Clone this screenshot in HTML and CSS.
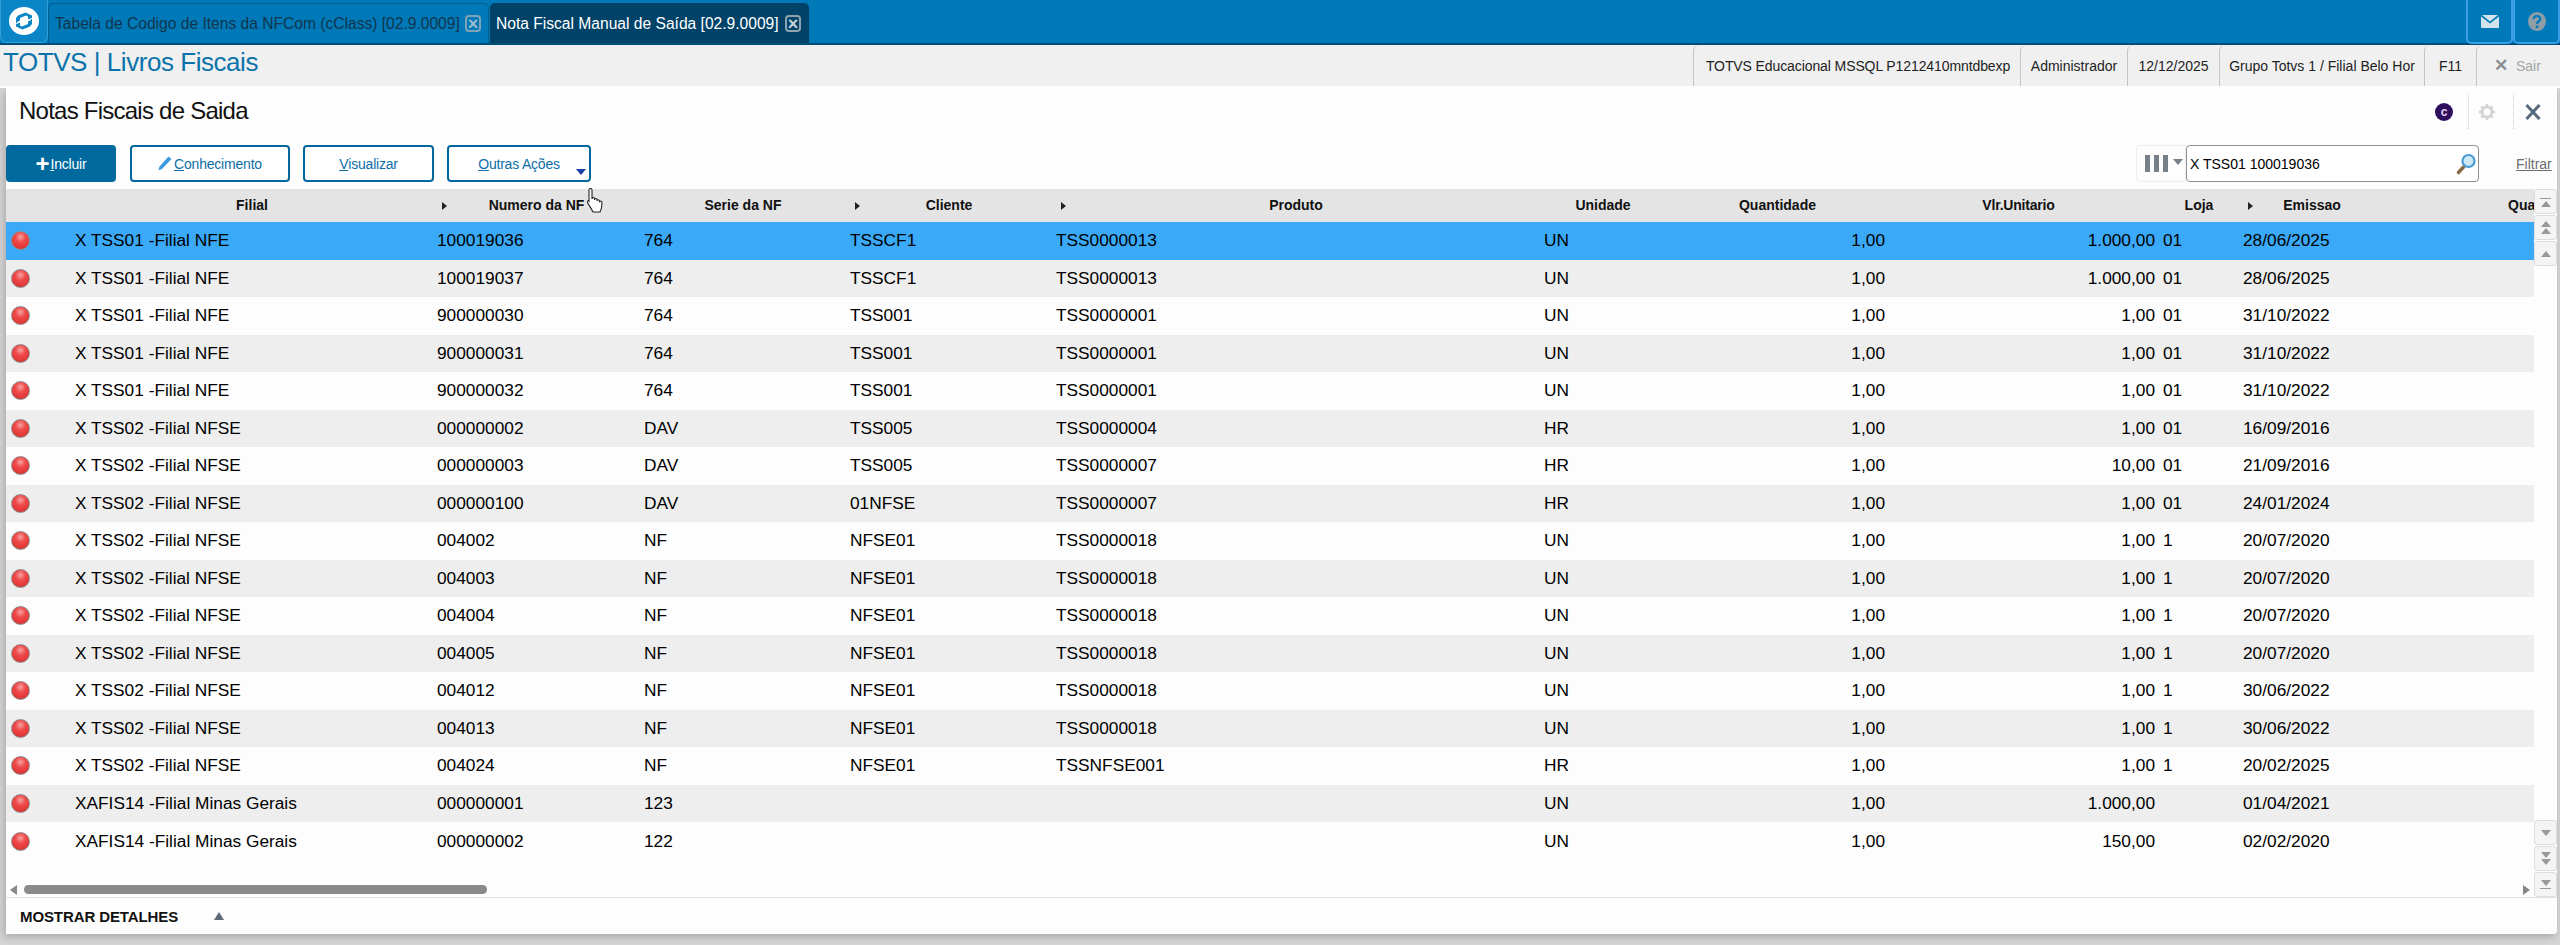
FILE: index.html
```html
<!DOCTYPE html>
<html lang="pt-BR">
<head>
<meta charset="utf-8">
<title>Notas Fiscais de Saida</title>
<link rel="stylesheet" href="styles.css">
</head>
<body>
<div class="app">
  <header class="topbar">
    <div class="logo">
      <svg width="30" height="28" viewBox="0 0 30 28"><ellipse cx="15" cy="14" rx="15" ry="14" fill="#fff"/><path d="M9 8.500 16.500 5.500 23 8.500 23 17 21 19.500 13.500 22.500 7 19.500 7 11z" fill="#0a86c6"/><path d="M6 17.500 19 12.500 19 9.500 17 8.500 11 11 11 13.500 9 14.500zM24 10.500 11 15.500 11 18.500 13 19.500 19 17 19 14.500 21 13.500z" fill="#fff"/></svg>
    </div>
    <div class="tab"><span class="tab-text">Tabela de Codigo de Itens da NFCom (cClass) [02.9.0009]</span><span class="tab-x">×</span></div>
    <div class="tab tab-active"><span class="tab-text">Nota Fiscal Manual de Saída [02.9.0009]</span><span class="tab-x">×</span></div>
    <div class="top-spacer"></div>
    <div class="top-btn">
      <svg width="18" height="13" viewBox="0 0 18 13"><path d="M1 0h16L9 6.500z" fill="#d3e3ec"/><path d="M0 1.500V12a1 1 0 0 0 1 1h16a1 1 0 0 0 1-1V1.500L9 8.500z" fill="#d3e3ec"/></svg>
    </div>
    <div class="top-btn top-btn-last">
      <svg width="18" height="19" viewBox="0 0 18 19"><ellipse cx="9" cy="9.500" rx="9" ry="9.500" fill="#8e9da6"/><path d="M5.800 7c0-4 6.400-4 6.400 0 0 2.600-3.200 2.400-3.200 5" fill="none" stroke="#0079b8" stroke-width="2.200"/><rect x="7.800" y="13.500" width="2.400" height="2.500" fill="#0079b8"/></svg>
    </div>
  </header>
  <div class="infobar">
    <div class="brand">TOTVS | Livros Fiscais</div>
    <div class="info info-env">TOTVS Educacional MSSQL P1212410mntdbexp</div>
    <div class="info info-user">Administrador</div>
    <div class="info info-date">12/12/2025</div>
    <div class="info info-group">Grupo Totvs 1 / Filial Belo Hor</div>
    <div class="info info-key">F11</div>
    <div class="info info-exit"><span class="exit-x">✕</span> Sair</div>
  </div>
  <main class="panel">
    <div class="title-row">
      <h1 class="title">Notas Fiscais de Saida</h1>
      <div class="title-tools">
        <span class="badge">c</span>
        <span class="tool tool-gear">
          <svg width="16" height="16" viewBox="0 0 16 16"><circle cx="8" cy="8" r="5" fill="none" stroke="#d4d4d4" stroke-width="3"/><path d="M8 0v3M8 13v3M0 8h3M13 8h3M2.300 2.300l2 2M11.700 11.700l2 2M13.700 2.300l-2 2M4.300 11.700l-2 2" stroke="#d4d4d4" stroke-width="2.400"/></svg>
        </span>
        <span class="tool tool-close">
          <svg width="16" height="16" viewBox="0 0 16 16"><path d="M1.500 1 14.500 15M14.500 1 1.500 15" stroke="#566a7c" stroke-width="3"/></svg>
        </span>
      </div>
    </div>
    <div class="action-row">
      <button class="btn btn-primary"><span class="plus">+</span><u>I</u>ncluir</button>
      <button class="btn btn-know">
        <svg class="pencil" width="14" height="15" viewBox="0 0 14 15"><path d="M10.500 .5 13.500 3 4 13 .5 14.500 1.500 10.500z" fill="#3d9ae0"/></svg><u>C</u>onhecimento</button>
      <button class="btn btn-view"><u>V</u>isualizar</button>
      <button class="btn btn-more"><u>O</u>utras Ações<span class="caret"></span></button>
      <div class="action-spacer"></div>
      <div class="columns-btn"><span class="col-bars"><i></i><i></i><i></i></span><span class="col-caret"></span></div>
      <div class="search">
        <span class="search-text">X TSS01 100019036</span>
        <svg width="20" height="22" viewBox="0 0 20 22"><path d="M7.500 14 2.500 19.500" stroke="#8a6a45" stroke-width="3.500" stroke-linecap="round"/><circle cx="12.500" cy="8" r="6" fill="#cfe8f8" stroke="#4a9bd4" stroke-width="2.200"/></svg>
      </div>
      <a class="filter">Filtrar</a>
    </div>
    <div class="grid-wrap">
      <div class="table">
        <div class="thead cols">
          <div></div>
          <div class="th">Filial</div>
          <div class="th sorted">Numero da NF</div>
          <div class="th">Serie da NF</div>
          <div class="th sorted">Cliente</div>
          <div class="th sorted">Produto</div>
          <div class="th">Unidade</div>
          <div class="th th-end">Quantidade</div>
          <div class="th th-vlr">Vlr.Unitario</div>
          <div class="th th-end">Loja</div>
          <div class="th sorted">Emissao</div>
          <div class="th th-last">Qua</div>
        </div>
        <div class="row cols row-selected"><div><span class="dot"></span></div><div>X TSS01 -Filial NFE</div><div>100019036</div><div>764</div><div>TSSCF1</div><div>TSS0000013</div><div>UN</div><div class="num">1,00</div><div class="num">1.000,00</div><div class="loja">01</div><div>28/06/2025</div><div></div></div>
        <div class="row cols"><div><span class="dot"></span></div><div>X TSS01 -Filial NFE</div><div>100019037</div><div>764</div><div>TSSCF1</div><div>TSS0000013</div><div>UN</div><div class="num">1,00</div><div class="num">1.000,00</div><div class="loja">01</div><div>28/06/2025</div><div></div></div>
        <div class="row cols"><div><span class="dot"></span></div><div>X TSS01 -Filial NFE</div><div>900000030</div><div>764</div><div>TSS001</div><div>TSS0000001</div><div>UN</div><div class="num">1,00</div><div class="num">1,00</div><div class="loja">01</div><div>31/10/2022</div><div></div></div>
        <div class="row cols"><div><span class="dot"></span></div><div>X TSS01 -Filial NFE</div><div>900000031</div><div>764</div><div>TSS001</div><div>TSS0000001</div><div>UN</div><div class="num">1,00</div><div class="num">1,00</div><div class="loja">01</div><div>31/10/2022</div><div></div></div>
        <div class="row cols"><div><span class="dot"></span></div><div>X TSS01 -Filial NFE</div><div>900000032</div><div>764</div><div>TSS001</div><div>TSS0000001</div><div>UN</div><div class="num">1,00</div><div class="num">1,00</div><div class="loja">01</div><div>31/10/2022</div><div></div></div>
        <div class="row cols"><div><span class="dot"></span></div><div>X TSS02 -Filial NFSE</div><div>000000002</div><div>DAV</div><div>TSS005</div><div>TSS0000004</div><div>HR</div><div class="num">1,00</div><div class="num">1,00</div><div class="loja">01</div><div>16/09/2016</div><div></div></div>
        <div class="row cols"><div><span class="dot"></span></div><div>X TSS02 -Filial NFSE</div><div>000000003</div><div>DAV</div><div>TSS005</div><div>TSS0000007</div><div>HR</div><div class="num">1,00</div><div class="num">10,00</div><div class="loja">01</div><div>21/09/2016</div><div></div></div>
        <div class="row cols"><div><span class="dot"></span></div><div>X TSS02 -Filial NFSE</div><div>000000100</div><div>DAV</div><div>01NFSE</div><div>TSS0000007</div><div>HR</div><div class="num">1,00</div><div class="num">1,00</div><div class="loja">01</div><div>24/01/2024</div><div></div></div>
        <div class="row cols"><div><span class="dot"></span></div><div>X TSS02 -Filial NFSE</div><div>004002</div><div>NF</div><div>NFSE01</div><div>TSS0000018</div><div>UN</div><div class="num">1,00</div><div class="num">1,00</div><div class="loja">1</div><div>20/07/2020</div><div></div></div>
        <div class="row cols"><div><span class="dot"></span></div><div>X TSS02 -Filial NFSE</div><div>004003</div><div>NF</div><div>NFSE01</div><div>TSS0000018</div><div>UN</div><div class="num">1,00</div><div class="num">1,00</div><div class="loja">1</div><div>20/07/2020</div><div></div></div>
        <div class="row cols"><div><span class="dot"></span></div><div>X TSS02 -Filial NFSE</div><div>004004</div><div>NF</div><div>NFSE01</div><div>TSS0000018</div><div>UN</div><div class="num">1,00</div><div class="num">1,00</div><div class="loja">1</div><div>20/07/2020</div><div></div></div>
        <div class="row cols"><div><span class="dot"></span></div><div>X TSS02 -Filial NFSE</div><div>004005</div><div>NF</div><div>NFSE01</div><div>TSS0000018</div><div>UN</div><div class="num">1,00</div><div class="num">1,00</div><div class="loja">1</div><div>20/07/2020</div><div></div></div>
        <div class="row cols"><div><span class="dot"></span></div><div>X TSS02 -Filial NFSE</div><div>004012</div><div>NF</div><div>NFSE01</div><div>TSS0000018</div><div>UN</div><div class="num">1,00</div><div class="num">1,00</div><div class="loja">1</div><div>30/06/2022</div><div></div></div>
        <div class="row cols"><div><span class="dot"></span></div><div>X TSS02 -Filial NFSE</div><div>004013</div><div>NF</div><div>NFSE01</div><div>TSS0000018</div><div>UN</div><div class="num">1,00</div><div class="num">1,00</div><div class="loja">1</div><div>30/06/2022</div><div></div></div>
        <div class="row cols"><div><span class="dot"></span></div><div>X TSS02 -Filial NFSE</div><div>004024</div><div>NF</div><div>NFSE01</div><div>TSSNFSE001</div><div>HR</div><div class="num">1,00</div><div class="num">1,00</div><div class="loja">1</div><div>20/02/2025</div><div></div></div>
        <div class="row cols"><div><span class="dot"></span></div><div>XAFIS14 -Filial Minas Gerais</div><div>000000001</div><div>123</div><div></div><div></div><div>UN</div><div class="num">1,00</div><div class="num">1.000,00</div><div class="loja"></div><div>01/04/2021</div><div></div></div>
        <div class="row cols"><div><span class="dot"></span></div><div>XAFIS14 -Filial Minas Gerais</div><div>000000002</div><div>122</div><div></div><div></div><div>UN</div><div class="num">1,00</div><div class="num">150,00</div><div class="loja"></div><div>02/02/2020</div><div></div></div>
        <div class="table-fill"></div>
        <div class="hscroll">
          <span class="arrow-left"></span>
          <span class="thumb"></span>
          <span class="hscroll-fill"></span>
          <span class="arrow-right"></span>
        </div>
      </div>
      <aside class="vscroll">
        <div class="vbtn"><span class="bar"></span><span class="up"></span></div>
        <div class="vbtn"><span class="up"></span><span class="up"></span></div>
        <div class="vbtn vbtn-up"><span class="up"></span></div>
        <div class="vfill"></div>
        <div class="vbtn vbtn-down"><span class="down"></span></div>
        <div class="vbtn"><span class="down"></span><span class="down"></span></div>
        <div class="vbtn"><span class="down"></span><span class="bar"></span></div>
      </aside>
    </div>
    <footer class="details">
      <span class="details-label">MOSTRAR DETALHES</span>
      <span class="details-caret"></span>
    </footer>
  </main>
  <svg class="hand" width="16" height="25" viewBox="0 0 16 25"><path d="M2 2c0-2 3-2 3 0v9c0-2 2.500-2 2.500 0v1c0-2 2.500-2 2.500 0v1c0-2 2.500-1.500 2.500 .5 .8-.8 2.500-.5 2.500 1.500 0 3-.5 6-2 9H6C4.500 21 2.500 18 1 15.500-.2 13.500 1 12 2 13z" fill="#fff" stroke="#222" stroke-width="1.100"/></svg>
</div>
</body>
</html>
```

FILE: styles.css
```css
* { box-sizing: border-box; }
html, body { margin: 0; height: 945px; overflow: hidden; }
body { font-family: "Liberation Sans", Arial, sans-serif; color: #000; background: #d6d6d6; }
.app { position: relative; display: flex; flex-direction: column; height: 945px; }

.topbar { display: flex; height: 45px; flex: none; background: #0079b8; border-bottom: 2px solid #004e78; }
.logo { width: 48px; display: flex; align-items: center; justify-content: center; background: #0a86c6; border: 1px solid #2f9fd6; border-top: 0; border-radius: 0 0 6px 6px; }
.tab { display: flex; align-items: center; width: 441px; margin-top: 3px; padding-left: 6px; font-size: 15.600px; color: #12354c; background: #0079b8; border: 1px solid #005d8e; border-bottom: 0; border-radius: 5px 5px 0 0; }
.tab-active { width: 319px; margin-left: 1px; background: #004268; border-color: #004268; color: #fff; padding-left: 5px; }
.tab-text { flex: 1; white-space: nowrap; overflow: hidden; }
.tab-x { width: 16px; height: 17px; margin-right: 7px; flex: none; display: flex; align-items: center; justify-content: center; border: 2px solid #7fa3b8; border-radius: 4px; color: #9dbccd; font-size: 18px; font-weight: bold; line-height: 1; }
.tab-active .tab-x { color: #c8d4da; border-color: #8fa3ae; }
.top-spacer { flex: 1; }
.top-btn { width: 47px; display: flex; align-items: center; justify-content: center; border: 2px solid #3a9de6; border-top: 0; border-radius: 0 0 5px 5px; margin-bottom: -1px; }
.top-btn-last { margin-left: 0; }

.infobar { position: relative; z-index: 1; display: flex; height: 43px; flex: none; background: #f0f0f0; border-bottom: 2px solid #fdfdfd; font-size: 14px; color: #222; }
.brand { flex: 1; padding: 1px 0 0 3px; font-size: 26px; line-height: 32px; color: #0b73ab; letter-spacing: -0.45px; }
.info { display: flex; align-items: center; justify-content: center; white-space: nowrap; overflow: hidden; border-left: 1px solid #c4c4c4; border-radius: 6px 0 0 0; }
.info-env { width: 327px; letter-spacing: -0.1px; padding-left: 2px; }
.info-user { width: 107px; }
.info-date { width: 92px; }
.info-group { width: 205px; }
.info-key { width: 52px; }
.info-exit { width: 84px; color: #a4a4a4; gap: 8px; justify-content: flex-start; padding-left: 17px; }
.exit-x { color: #8a8f94; font-size: 17px; font-weight: bold; }

.panel { position: relative; flex: none; display: flex; flex-direction: column; height: 846px; margin: 0 3px 0 6px; background: #fdfdfd; box-shadow: -2px 3px 8px rgba(0,0,0,.22); border-radius: 0 0 4px 0; }
.title-row { display: flex; align-items: center; height: 55px; flex: none; padding: 0 16px 9px 13px; justify-content: space-between; }
.title { margin: 0; font-size: 24px; font-weight: normal; letter-spacing: -0.76px; color: #111; }
.title-tools { display: flex; align-items: center; height: 35px; margin-top: 1px; }
.badge { width: 18px; height: 18px; margin-right: 15px; display: flex; align-items: center; justify-content: center; border-radius: 50%; background: #2d0f5c; color: #e9d9f4; font-size: 12px; font-weight: bold; line-height: 1; }
.tool { display: flex; align-items: center; height: 35px; border-left: 1px dotted #c8c8c8; }
.tool-gear { width: 45px; padding-left: 10px; }
.tool-close { padding-left: 11px; }

.action-row { display: flex; align-items: stretch; height: 37px; flex: none; margin-top: 2px; font-size: 14px; }
.btn { height: 37px; padding: 0; display: flex; align-items: center; justify-content: center; background: #fff; color: #0d6ea6; border: 2px solid #00689f; border-radius: 4px; font: inherit; font-size: 14px; letter-spacing: -0.2px; }
.btn-primary { width: 110px; background: #006a9e; color: #fff; margin-right: 14px; }
.plus { font-size: 24px; line-height: 1; margin-right: 1px; font-weight: bold; }
.btn-know { width: 160px; margin-right: 13px; }
.pencil { margin-right: 2px; }
.btn-view { width: 131px; margin-right: 13px; }
.btn-more { position: relative; width: 144px; }
.caret { position: absolute; right: 3px; bottom: 5px; border-left: 5px solid transparent; border-right: 5px solid transparent; border-top: 6px solid #1b3fa8; }
.action-spacer { flex: 1; }
.columns-btn { width: 50px; display: flex; align-items: center; gap: 5px; padding-left: 8px; border: 1px solid #eee; border-radius: 4px 0 0 4px; }
.col-bars { display: flex; gap: 4px; }
.col-bars i { width: 5px; height: 17px; background: #777f88; }
.col-caret { border-left: 5px solid transparent; border-right: 5px solid transparent; border-top: 6px solid #777f88; margin-bottom: 3px; }
.search { width: 293px; display: flex; align-items: center; justify-content: space-between; padding: 0 2px 0 3px; background: #fff; border: 1px solid #8f8f8f; border-radius: 4px; font-size: 14px; }
.filter { width: 78px; padding-left: 37px; align-self: center; color: #6e6e6e; font-size: 14px; text-decoration: underline; white-space: nowrap; }

.grid-wrap { display: flex; flex: 1; min-height: 0; margin-top: 7px; }
.table { flex: none; width: 2528px; display: flex; flex-direction: column; overflow: hidden; }
.cols { display: grid; grid-template-columns: 69px 362px 207px 206px 206px 488px 126px 215px 270px 88px 146px 145px; }
.thead { height: 33px; flex: none; padding-bottom: 2px; background: #e4e4e4; font-size: 14px; font-weight: bold; align-items: center; }
.th { position: relative; text-align: center; padding-right: 8px; white-space: nowrap; color: #111; }
.th-end { padding-right: 0; }
.th-vlr { padding-right: 3px; letter-spacing: -0.2px; }
.sorted::before { content: ""; position: absolute; left: 5px; top: 5px; border-top: 4px solid transparent; border-bottom: 4px solid transparent; border-left: 5px solid #222; }
.th-last { padding: 0 0 0 119px; text-align: left; }
.row { height: 37.530px; flex: none; align-items: center; font-size: 17.300px; white-space: nowrap; background: #fdfdfd; }
.row:nth-child(odd) { background: #eee; }
.row.row-selected { background: #3aa9f8; }
.dot { display: block; width: 19px; height: 19px; margin-left: 5px; border-radius: 50%; border: 1px solid #8f8a8a; background: radial-gradient(circle at 50% 30%, #f5a3a3 0, #f04a4a 35%, #e23838 70%, #b04444 100%); }
.num { text-align: right; }
.loja { padding-left: 8px; }
.table-fill { flex: 1; }
.hscroll { display: flex; align-items: center; gap: 3px; height: 9px; flex: none; margin-bottom: 3px; padding-left: 4px; padding-right: 4px; }
.arrow-left { border-top: 5px solid transparent; border-bottom: 5px solid transparent; border-right: 7px solid #888; }
.thumb { width: 463px; height: 9px; border-radius: 5px; background: #8a8a8a; margin-left: 4px; }
.hscroll-fill { flex: 1; }
.arrow-right { border-top: 5px solid transparent; border-bottom: 5px solid transparent; border-left: 7px solid #888; }

.vscroll { flex: none; width: 23px; display: flex; flex-direction: column; gap: 1px; }
.vbtn { height: 25px; display: flex; flex-direction: column; align-items: center; justify-content: center; gap: 1px; background: #f4f4f4; border: 1px solid #dcdcdc; border-radius: 3px; flex: none; }
.vfill { flex: 1; }
.up { border-left: 5px solid transparent; border-right: 5px solid transparent; border-bottom: 6px solid #999; }
.down { border-left: 5px solid transparent; border-right: 5px solid transparent; border-top: 6px solid #999; }
.bar { width: 11px; height: 1px; background: #999; margin: 1px 0; }

.details { display: flex; align-items: center; height: 37px; flex: none; padding-left: 14px; border-top: 1px solid #e2e2e2; background: #fdfdfd; border-radius: 0 0 4px 4px; }
.details-label { font-size: 15px; font-weight: bold; color: #111; letter-spacing: -0.1px; }
.details-caret { margin-left: 36px; border-left: 5px solid transparent; border-right: 5px solid transparent; border-bottom: 8px solid #5d6b78; }

.hand { position: absolute; left: 587px; top: 188px; }
```
